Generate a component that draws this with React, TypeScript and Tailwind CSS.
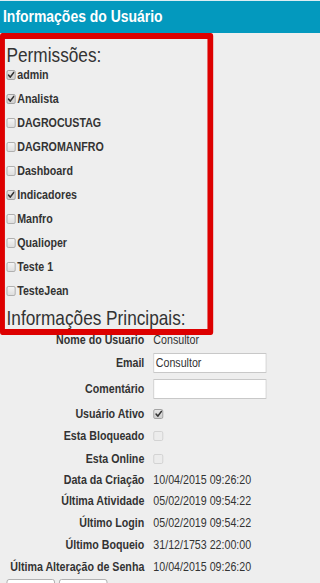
import React from "react";

function Box({ checked, disabled, small }: { checked?: boolean; disabled?: boolean; small?: boolean }) {
  const size = small ? "w-[11px] h-[10px]" : "w-[12px] h-[10px]";
  const look = disabled
    ? "border-[#cfcfcf] bg-[#ececec]"
    : checked
    ? "border-[#9a9a9a] bg-gradient-to-b from-[#e6e6e6] to-[#cfcfcf]"
    : "border-[#a8a8a8] bg-gradient-to-b from-[#f4f4f4] to-[#dedede]";
  return (
    <span className={`inline-flex shrink-0 items-center justify-center rounded-[2px] border ${size} ${look}`}>
      {checked && (
        <svg viewBox="0 0 10 10" className="h-[8px] w-[9px]" preserveAspectRatio="none">
          <path d="M1.5 5.2 L4 7.6 L8.6 1.8" fill="none" stroke="#333" strokeWidth="2" strokeLinecap="round" strokeLinejoin="round" />
        </svg>
      )}
    </span>
  );
}

const perms: [string, boolean][] = [
  ["admin", true],
  ["Analista", true],
  ["DAGROCUSTAG", false],
  ["DAGROMANFRO", false],
  ["Dashboard", false],
  ["Indicadores", true],
  ["Manfro", false],
  ["Qualioper", false],
  ["Teste 1", false],
  ["TesteJean", false],
];

function Row({ label, h, children }: { label: string; h: string; children?: React.ReactNode }) {
  return (
    <div className={`flex items-center ${h}`}>
      <div className="w-[176px] shrink-0 text-right font-bold whitespace-nowrap">{label}</div>
      <div className="ml-[11px] flex items-center whitespace-nowrap">{children}</div>
    </div>
  );
}

export default function App() {
  return (
    <div className="min-h-[583px] w-full overflow-hidden bg-[#eeeeee] font-['Liberation_Sans',Arial,sans-serif] text-[13px] text-[#333333]">
      <div className="flex h-[33px] w-full items-center border-t border-[#dcedf3] bg-[#0399be] pl-[3px] font-bold text-white">
        <span className="inline-block origin-left scale-x-[0.82] whitespace-nowrap text-[17px]">Informações do Usuário</span>
      </div>

      <div className="relative flex w-[345px] origin-top-left scale-x-[0.82] flex-col pt-[13px]">
        <div className="flex flex-col pl-[8px]">
          <div className="text-[21px] leading-[17px]">Permissões:</div>
          {perms.map(([name, on]) => (
            <div key={name} className="flex h-[24px] items-center">
              <Box small checked={on} />
              <span className="ml-[2px] font-bold">{name}</span>
            </div>
          ))}
          <div className="mt-[6px] text-[21px] leading-[17px] whitespace-nowrap">Informações Principais:</div>
        </div>

        <div className="mt-[3px] flex flex-col">
          <Row label="Nome do Usuario" h="h-[22px]">
            <span>Consultor</span>
          </Row>
          <Row label="Email" h="h-[24px]">
            <div className="flex h-[20px] w-[138px] items-center border border-[#c8c8c8] bg-white pl-[2px]">Consultor</div>
          </Row>
          <Row label="Comentário" h="h-[28px]">
            <div className="h-[20px] w-[138px] border border-[#c8c8c8] bg-white" />
          </Row>
          <Row label="Usuário Ativo" h="h-[21px]">
            <Box checked />
          </Row>
          <Row label="Esta Bloqueado" h="h-[24px]">
            <Box disabled />
          </Row>
          <Row label="Esta Online" h="h-[21px]">
            <Box disabled />
          </Row>
          <Row label="Data da Criação" h="h-[21px]">
            <span>10/04/2015 09:26:20</span>
          </Row>
          <Row label="Última Atividade" h="h-[22px]">
            <span>05/02/2019 09:54:22</span>
          </Row>
          <Row label="Último Login" h="h-[22px]">
            <span>05/02/2019 09:54:22</span>
          </Row>
          <Row label="Último Boqueio" h="h-[22px]">
            <span>31/12/1753 22:00:00</span>
          </Row>
          <Row label="Última Alteração de Senha" h="h-[21px]">
            <span>10/04/2015 09:26:20</span>
          </Row>
          <div className="mt-[2px] flex gap-[5px] pl-[8px]">
            <button className="h-[24px] w-[59px] rounded-[3px] border border-[#a9a9a9] bg-white" />
            <button className="h-[24px] w-[59px] rounded-[3px] border border-[#a9a9a9] bg-white" />
          </div>
        </div>

        <div className="pointer-events-none absolute left-0 top-0 h-[302px] w-[260px] rounded-[3px] border-[6px] border-l-[6px] border-r-[7px] border-[#dd0000]" />
      </div>
    </div>
  );
}
